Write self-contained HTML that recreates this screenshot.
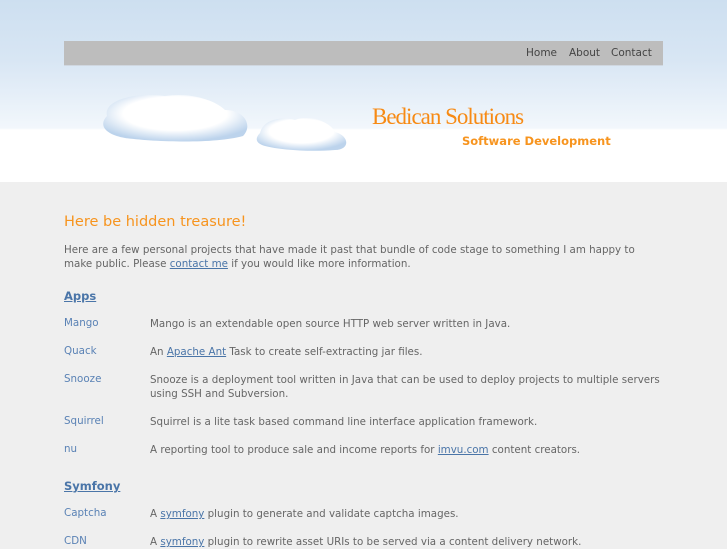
<!DOCTYPE html>
<html><head><style>
body{margin:0;width:727px;height:545px;overflow:hidden;background:#efefef;font-family:"DejaVu Sans",sans-serif;font-size:10.3px;color:#666;}
#hd{position:absolute;left:0;top:0;width:727px;height:182px;background:linear-gradient(#cddff0 0px,#d8e6f4 60px,#f2f7fc 128px,#fff 130px,#fff 182px);}
#nav{position:absolute;left:64px;top:41px;width:599px;height:24px;background:#bdbdbd;border-bottom:1px solid #d0d7e0;}
#nav span{position:absolute;top:6px;color:#444;font-size:10.5px}
.title{position:absolute;left:372px;top:104px;color:#f78a14;font-family:"Liberation Serif",serif;font-size:23px;letter-spacing:-1px}
.sub{position:absolute;left:462px;top:134px;color:#f7941e;font-weight:bold;font-size:11.5px}
.c{position:absolute;left:64px;}
a{color:#4a75a8;text-decoration:underline}
.h{color:#f7941e;font-size:14.5px;top:214px}
.l{position:absolute;left:64px;color:#5a82b5}
.d{position:absolute;left:150px;width:520px;line-height:14px}
.s{position:absolute;left:64px;color:#4a75a8;font-weight:bold;font-size:11.5px;text-decoration:underline}
</style></head><body>
<div id="hd">
<div id="nav"><span style="left:462px">Home</span><span style="left:505px">About</span><span style="left:547px">Contact</span></div>
<svg style="position:absolute;left:95px;top:88px" width="260" height="70">
<defs><radialGradient id="g" cx="50%" cy="40%" r="60%"><stop offset="0.6" stop-color="#fff"/><stop offset="1" stop-color="#bcd3ec"/></radialGradient></defs>
<path d="M12 28 C8 12 40 4 70 8 C95 4 120 12 130 22 C150 22 158 38 148 48 C120 56 60 54 30 50 C8 46 4 36 12 28Z" fill="url(#g)"/>
<path d="M165 45 C168 32 185 28 200 32 C215 26 235 34 240 44 C255 48 255 62 240 62 C215 64 185 62 170 58 C160 55 160 50 165 45Z" fill="url(#g)"/>
</svg>
<div class="title">Bedican Solutions</div>
<div class="sub">Software Development</div>
</div>
<div class="c h">Here be hidden treasure!</div>
<div class="c" style="top:243px;line-height:14px;width:600px">Here are a few personal projects that have made it past that bundle of code stage to something I am happy to make public. Please <a>contact me</a> if you would like more information.</div>
<div class="s" style="top:289px">Apps</div>
<div class="l" style="top:317px">Mango</div><div class="d" style="top:317px">Mango is an extendable open source HTTP web server written in Java.</div>
<div class="l" style="top:345px">Quack</div><div class="d" style="top:345px">An <a>Apache Ant</a> Task to create self-extracting jar files.</div>
<div class="l" style="top:373px">Snooze</div><div class="d" style="top:373px">Snooze is a deployment tool written in Java that can be used to deploy projects to multiple servers using SSH and Subversion.</div>
<div class="l" style="top:415px">Squirrel</div><div class="d" style="top:415px">Squirrel is a lite task based command line interface application framework.</div>
<div class="l" style="top:443px">nu</div><div class="d" style="top:443px">A reporting tool to produce sale and income reports for <a>imvu.com</a> content creators.</div>
<div class="s" style="top:479px">Symfony</div>
<div class="l" style="top:507px">Captcha</div><div class="d" style="top:507px">A <a>symfony</a> plugin to generate and validate captcha images.</div>
<div class="l" style="top:535px">CDN</div><div class="d" style="top:535px">A <a>symfony</a> plugin to rewrite asset URIs to be served via a content delivery network.</div>
</body></html>
